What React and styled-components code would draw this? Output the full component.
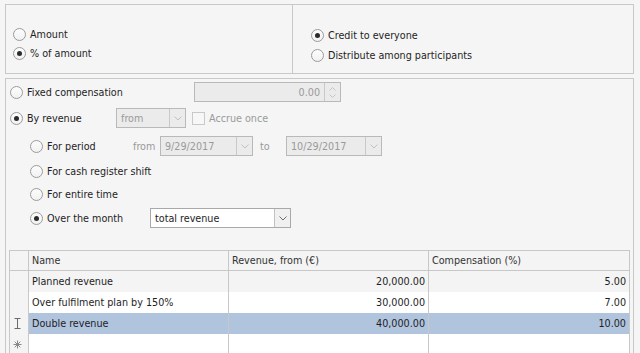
import React from "react";
import styled, { createGlobalStyle } from "styled-components";

const GlobalStyle = createGlobalStyle`
  body {
    margin: 0;
    background: #f5f5f5;
    font-family: "DejaVu Sans Condensed", Tahoma, "Liberation Sans", sans-serif;
    font-size: 10.7px;
    color: #1e1e1e;
  }
`;

const Page = styled.div`
  width: 640px;
  height: 353px;
  overflow: hidden;
  box-sizing: border-box;
  padding: 4px 6px 0 5px;
`;

const TopRow = styled.div`
  display: flex;
  height: 70px;
`;

const Group = styled.div`
  box-sizing: border-box;
  border: 1px solid #c8c8c8;
  border-right: ${(p) => (p.$open ? "none" : "1px solid #c8c8c8")};
  width: ${(p) => p.$width || "auto"};
  flex: ${(p) => (p.$width ? "none" : 1)};
  padding: 20px 0 0 ${(p) => p.$pad}px;
`;

const Options = styled.div`
  box-sizing: border-box;
  margin-top: 4px;
  border: 1px solid #c8c8c8;
  border-bottom: none;
  height: 280px;
  padding: 3px 3px 0 3px;
`;

const Row = styled.div`
  display: flex;
  align-items: center;
  height: ${(p) => p.$h || 20}px;
  margin-top: ${(p) => p.$mt || 0}px;
  padding-left: ${(p) => p.$indent || 1}px;
`;

const RadioItem = styled.label`
  display: flex;
  align-items: center;
  gap: 4px;
  width: ${(p) => (p.$w ? p.$w + "px" : "auto")};
  flex: none;
  white-space: nowrap;
`;

const RadioCircle = styled.span`
  position: relative;
  box-sizing: border-box;
  width: 13px;
  height: 13px;
  border-radius: 50%;
  border: 1px solid #9b9b9b;
  background: linear-gradient(#fdfdfd, #f1f1f1);
  flex: none;
  &::after {
    content: "";
    display: ${(p) => (p.$on ? "block" : "none")};
    position: absolute;
    left: 3px;
    top: 3px;
    width: 5px;
    height: 5px;
    border-radius: 50%;
    background: #2b2b2b;
  }
`;

const Muted = styled.span`
  color: #9a9a9a;
  width: ${(p) => p.$w}px;
  margin-left: ${(p) => p.$ml || 0}px;
  flex: none;
`;

const Box = styled.div`
  box-sizing: border-box;
  display: flex;
  align-items: stretch;
  width: ${(p) => p.$w}px;
  height: ${(p) => p.$h || 20}px;
  border: 1px solid ${(p) => (p.$off ? "#b9b9b9" : "#a9a9a9")};
  background: ${(p) => (p.$off ? "#ebebeb" : "#ffffff")};
  color: ${(p) => (p.$off ? "#9a9a9a" : "#1e1e1e")};
  flex: none;
`;

const BoxText = styled.div`
  flex: 1;
  display: flex;
  align-items: center;
  justify-content: ${(p) => (p.$right ? "flex-end" : "flex-start")};
  padding: 0 4px;
  white-space: nowrap;
  overflow: hidden;
`;

const DropButton = styled.div`
  width: 15px;
  border-left: 1px solid ${(p) => (p.$off ? "#c9c9c9" : "#c2c2c2")};
  background: ${(p) => (p.$off ? "#ebebeb" : "#f0f0f0")};
  display: flex;
  align-items: center;
  justify-content: center;
`;

const SpinButtons = styled.div`
  width: 15px;
  border-left: 1px solid #c9c9c9;
  display: flex;
  flex-direction: column;
  align-items: center;
  justify-content: center;
  gap: 3px;
`;

const CheckBox = styled.span`
  box-sizing: border-box;
  width: 13px;
  height: 13px;
  border: 1px solid #c9c9c9;
  background: #f7f7f7;
  margin: 0 4px 0 6px;
  flex: none;
`;

const Grid = styled.div`
  margin-top: 22px;
  border: 1px solid #c8c8c8;
  border-bottom: none;
  display: grid;
  grid-template-columns: 19px 200px 200px 200px;
`;

const Cell = styled.div`
  box-sizing: border-box;
  height: ${(p) => (p.$head ? 20 : 21)}px;
  border-right: ${(p) => (p.$last ? "none" : "1px solid #c8c8c8")};
  border-bottom: ${(p) => (p.$head ? "1px solid #c8c8c8" : "none")};
  background: ${(p) => p.$bg};
  color: ${(p) => (p.$head ? "#333" : "#1e1e1e")};
  display: flex;
  align-items: center;
  justify-content: ${(p) => (p.$right ? "flex-end" : p.$center ? "center" : "flex-start")};
  padding: 0 3px 0 ${(p) => (p.$center ? 0 : 3)}px;
  white-space: nowrap;
  overflow: hidden;
`;

const Chevron = ({ color }) => (
  <svg width="8" height="5" viewBox="0 0 8 5">
    <polyline points="0.5,0.5 4,4 7.5,0.5" fill="none" stroke={color} strokeWidth="1" />
  </svg>
);

const SpinArrow = ({ up }) => (
  <svg width="7" height="4" viewBox="0 0 7 4">
    <polyline
      points={up ? "0.5,3.5 3.5,0.5 6.5,3.5" : "0.5,0.5 3.5,3.5 6.5,0.5"}
      fill="none"
      stroke="#c4c4c4"
      strokeWidth="1"
    />
  </svg>
);

const IBeam = () => (
  <svg width="7" height="11" viewBox="0 0 7 11">
    <path d="M0.5 0.5h6M0.5 10.5h6M3.5 0.5v10" stroke="#6a6a6a" strokeWidth="1" fill="none" />
  </svg>
);

const NewRowMark = () => (
  <svg width="9" height="9" viewBox="0 0 9 9">
    <path
      d="M4.5 0.5v8M0.5 4.5h8M1.7 1.7l5.6 5.6M7.3 1.7l-5.6 5.6"
      stroke="#8a8a8a"
      strokeWidth="1"
      fill="none"
    />
  </svg>
);

const Radio = ({ on, label, w }) => (
  <RadioItem $w={w}>
    <RadioCircle $on={on} />
    <span>{label}</span>
  </RadioItem>
);

const Combo = ({ w, value, off }) => (
  <Box $w={w} $off={off}>
    <BoxText>{value}</BoxText>
    <DropButton $off={off}>
      <Chevron color={off ? "#c0c0c0" : "#6c6c6c"} />
    </DropButton>
  </Box>
);

const rows = [
  { name: "Planned revenue", from: "20,000.00", pct: "5.00", bg: "#f4f4f4" },
  { name: "Over fulfilment plan by 150%", from: "30,000.00", pct: "7.00", bg: "#ffffff" },
  { name: "Double revenue", from: "40,000.00", pct: "10.00", bg: "#b0c4de", mark: <IBeam /> },
  { name: "", from: "", pct: "", bg: "#ffffff", mark: <NewRowMark /> },
];

export default function App() {
  return (
    <Page>
      <GlobalStyle />
      <TopRow>
        <Group $width="287px" $open $pad={6}>
          <Row $h={19} $indent={0}>
            <Radio label="Amount" />
          </Row>
          <Row $h={19} $indent={0}>
            <Radio on label="% of amount" />
          </Row>
        </Group>
        <Group $pad={17}>
          <Row $indent={0}>
            <Radio on label="Credit to everyone" />
          </Row>
          <Row $indent={0}>
            <Radio label="Distribute among participants" />
          </Row>
        </Group>
      </TopRow>

      <Options>
        <Row $indent={1}>
          <Radio label="Fixed compensation" w={184} />
          <Box $w={147} $off>
            <BoxText $right>0.00</BoxText>
            <SpinButtons>
              <SpinArrow up />
              <SpinArrow />
            </SpinButtons>
          </Box>
        </Row>
        <Row $mt={6} $indent={1}>
          <Radio on label="By revenue" w={106} />
          <Combo w={70} value="from" off />
          <CheckBox />
          <Muted>Accrue once</Muted>
        </Row>
        <Row $mt={8} $indent={21}>
          <Radio label="For period" w={103} />
          <Muted $w={27}>from</Muted>
          <Combo w={93} value="9/29/2017" off />
          <Muted $w={26} $ml={7}>to</Muted>
          <Combo w={96} value="10/29/2017" off />
        </Row>
        <Row $mt={5} $indent={21}>
          <Radio label="For cash register shift" />
        </Row>
        <Row $mt={3} $indent={21}>
          <Radio label="For entire time" />
        </Row>
        <Row $mt={4} $indent={21}>
          <Radio on label="Over the month" w={120} />
          <Combo w={141} value="total revenue" />
        </Row>

        <Grid>
          <Cell $head $bg="#f4f4f4" />
          <Cell $head $bg="#f4f4f4">Name</Cell>
          <Cell $head $bg="#f4f4f4">Revenue, from (€)</Cell>
          <Cell $head $last $bg="#f4f4f4">Compensation (%)</Cell>
          {rows.map((r, i) => (
            <React.Fragment key={i}>
              <Cell $bg="#f4f4f4" $center>{r.mark}</Cell>
              <Cell $bg={r.bg}>{r.name}</Cell>
              <Cell $bg={r.bg} $right>{r.from}</Cell>
              <Cell $bg={r.bg} $right $last>{r.pct}</Cell>
            </React.Fragment>
          ))}
        </Grid>
      </Options>
    </Page>
  );
}
